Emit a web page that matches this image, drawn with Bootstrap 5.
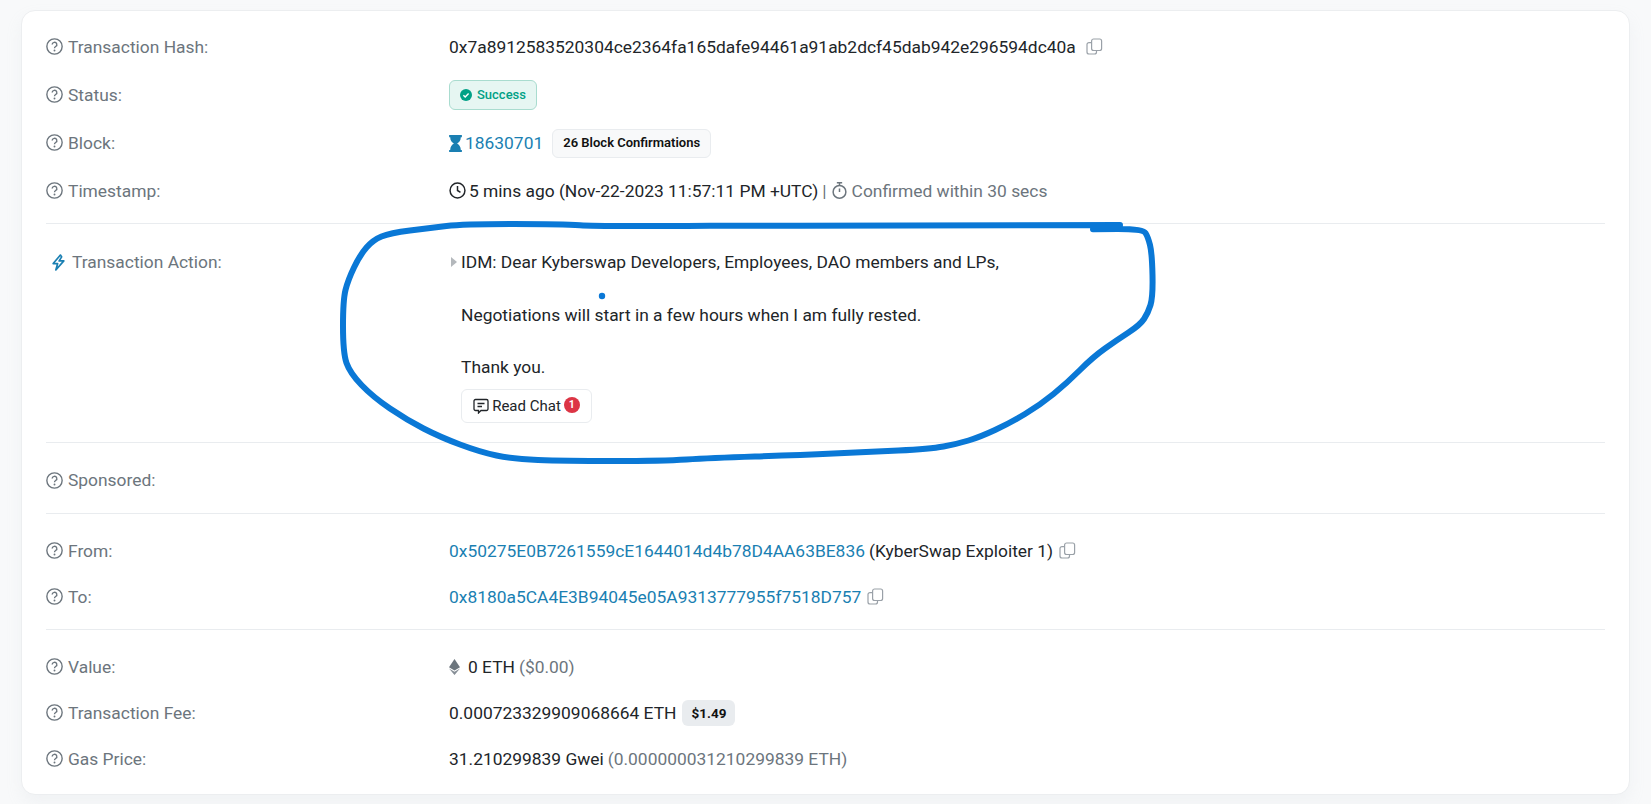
<!DOCTYPE html>
<html lang="en">
<head>
    <meta charset="UTF-8">
    <meta name="viewport" content="width=device-width, initial-scale=1.0">
    <title>Transaction Details</title>
    <link href="https://cdn.jsdelivr.net/npm/bootstrap@5.3.0/dist/css/bootstrap.min.css" rel="stylesheet">
    <style>
        body { background: #f8f9fa; font-family: Roboto, "Liberation Sans", sans-serif; font-size: 17.4px; color: #212529; height: 804px; overflow: hidden; }
        .tx-card { margin: 10px 21px 0 21px; height: 785px; padding: 12px 24px 0 24px; border-radius: 14px; border: 1px solid #eceef0; box-shadow: 0 8px 16px rgba(189,197,209,.12); }
        .tx-row { height: 46px; }
        .tx-row-tall { height: 48px; }
        .tx-row-ad { height: 46.5px; }
        .tx-label { width: 403px; color: #6c757d; gap: 5px; }
        .tx-rule { margin: 9px 0 14px; border-top: 1px solid #e9ecef; opacity: 1; }
        .tx-rule-top { margin-top: 8px; }
        .tx-action { padding: 11px 0 10px; }
        .tx-action-text { line-height: 26.25px; }
        .tx-link { color: #1a7fb2; text-decoration: none; }
        .tx-muted { color: #6c757d; }
        .tx-icon { width: 17px; height: 17px; flex-shrink: 0; }
        .tx-gap { margin-right: 3px; }
        .tx-copy { width: 17px; height: 17px; color: #9aa1a8; margin-left: 10px; }
        .tx-copy-near { margin-left: 6px; }
        .tx-ok { height: 30px; width: 88px; gap: 5px; background: #e6f6f2; border: 1px solid #a9dccf; border-radius: 6px; color: #00a186; font-size: 13px; font-weight: 500; }
        .tx-confirm { height: 29px; width: 159px; margin-left: 9px; background: #f8f9fa; border: 1px solid #e9ecef; border-radius: 6px; font-size: 13px; font-weight: 600; color: #111; }
        .tx-usd { height: 26px; width: 53px; margin-left: 6px; background: #e9ecef; border-radius: 6px; font-size: 13.500px; font-weight: 700; color: #111; }
        .tx-caret { width: 0; height: 0; border-left: 6px solid #b4b8bc; border-top: 5px solid transparent; border-bottom: 5px solid transparent; margin: 0 4px 0 2px; }
        .tx-chat { height: 34px; width: 131px; margin: 9px 0 0 12px; gap: 3px; border: 1px solid #e9ecef; border-radius: 6px; background: #fff; font-size: 15px; color: #212529; padding: 0; }
        .tx-count { width: 16px; height: 16px; padding: 0; font-size: 10.5px; line-height: 16px; background: #dc3545; margin-top: -1px; }
        .tx-scribble { position: absolute; left: 0; top: 0; pointer-events: none; }
    </style>
</head>
<body>
    <svg width="0" height="0" class="d-block">
        <symbol id="ico-help" viewBox="0 0 16 16">
            <circle cx="8" cy="8" r="7.2" fill="none" stroke="#6c757d" stroke-width="1.3"/>
            <path d="M5.8 6.2a2.2 2.1 0 1 1 3.3 1.8c-.8.5-1.1.9-1.1 1.700" fill="none" stroke="#6c757d" stroke-width="1.3"/>
            <circle cx="8" cy="11.800" r=".9" fill="#6c757d"/>
        </symbol>
        <symbol id="ico-copy" viewBox="0 0 17 17">
            <rect x="5.600" y="1" width="10" height="11.500" rx="2" fill="none" stroke="currentColor" stroke-width="1.2"/>
            <path d="M5.600 4.600H3a2 2 0 0 0-2 2V14a2 2 0 0 0 2 2h5.500a2 2 0 0 0 2-2v-1.500" fill="none" stroke="currentColor" stroke-width="1.2"/>
        </symbol>
    </svg>

    <div class="card tx-card">
        <div class="d-flex align-items-center tx-row-tall">
            <div class="tx-label d-flex align-items-center"><svg class="tx-icon"><use href="#ico-help"/></svg>Transaction Hash:</div>
            <div class="d-flex align-items-center">0x7a8912583520304ce2364fa165dafe94461a91ab2dcf45dab942e296594dc40a<svg class="tx-copy"><use href="#ico-copy"/></svg></div>
        </div>
        <div class="d-flex align-items-center tx-row-tall">
            <div class="tx-label d-flex align-items-center"><svg class="tx-icon"><use href="#ico-help"/></svg>Status:</div>
            <span class="tx-ok d-inline-flex align-items-center justify-content-center">
                <svg width="12" height="12" viewBox="0 0 12 12"><circle cx="6" cy="6" r="6" fill="#00a186"/><path d="M3.400 6.200l1.800 1.800 3.400-3.600" fill="none" stroke="#fff" stroke-width="1.4"/></svg>Success
            </span>
        </div>
        <div class="d-flex align-items-center tx-row-tall">
            <div class="tx-label d-flex align-items-center"><svg class="tx-icon"><use href="#ico-help"/></svg>Block:</div>
            <div class="d-flex align-items-center">
                <svg width="13" height="17" viewBox="0 0 12 16" class="tx-gap"><path d="M0 0h12v2h-1c0 3-1.600 4.800-3.500 6 1.900 1.200 3.500 3 3.500 6h1v2H0v-2h1c0-3 1.600-4.800 3.500-6C2.600 6.800 1 5 1 2H0z" fill="#1a7fb2"/></svg>
                <a href="#" class="tx-link">18630701</a>
                <span class="tx-confirm d-inline-flex align-items-center justify-content-center">26 Block Confirmations</span>
            </div>
        </div>
        <div class="d-flex align-items-center tx-row-tall">
            <div class="tx-label d-flex align-items-center"><svg class="tx-icon"><use href="#ico-help"/></svg>Timestamp:</div>
            <div class="d-flex align-items-center">
                <svg class="tx-icon tx-gap" viewBox="0 0 16 16"><circle cx="8" cy="8" r="7" fill="none" stroke="#212529" stroke-width="1.400"/><path d="M8 3.800V8l2.800 1.800" fill="none" stroke="#212529" stroke-width="1.400"/></svg>
                <span>5 mins ago (Nov-22-2023 11:57:11 PM +UTC)</span>
                <span class="tx-muted mx-1">|</span>
                <svg class="tx-icon me-1" viewBox="0 0 16 16"><circle cx="8" cy="9.300" r="6" fill="none" stroke="#6c757d" stroke-width="1.400"/><path d="M5.500.8h5M8 .8v2.500M8 6v3.500" fill="none" stroke="#6c757d" stroke-width="1.400"/></svg>
                <span class="tx-muted">Confirmed within 30 secs</span>
            </div>
        </div>

        <hr class="tx-rule tx-rule-top">

        <div class="d-flex tx-action">
            <div class="tx-label d-flex align-items-center align-self-start tx-action-text">
                <svg class="tx-icon ms-1" viewBox="0 0 16 16"><path d="M9.800 1L3 9h4.200L5.500 15l7.500-8.500H8.600l2.400-3.800z" fill="none" stroke="#1a7fb2" stroke-width="1.600" stroke-linejoin="round"/></svg>
                <span>Transaction Action:</span>
            </div>
            <div>
                <div class="d-flex align-items-center tx-action-text"><span class="tx-caret"></span><span>IDM: Dear Kyberswap Developers, Employees, DAO members and LPs,</span></div>
                <div class="tx-action-text ms-2 ps-1">&nbsp;</div>
                <div class="tx-action-text ms-2 ps-1">Negotiations will start in a few hours when I am fully rested.</div>
                <div class="tx-action-text ms-2 ps-1">&nbsp;</div>
                <div class="tx-action-text ms-2 ps-1">Thank you.</div>
                <button type="button" class="btn tx-chat d-flex align-items-center justify-content-center">
                    <svg width="16" height="16" viewBox="0 0 16 16"><path d="M2.500 1.500h11a1.500 1.500 0 0 1 1.500 1.500v8a1.500 1.500 0 0 1-1.500 1.500H8l-2.500 2.500v-2.500h-3A1.500 1.500 0 0 1 1 11V3a1.500 1.500 0 0 1 1.500-1.500zM4.500 5.500h7M4.500 8.500h4.500" fill="none" stroke="#212529" stroke-width="1.300"/></svg>
                    Read Chat
                    <span class="badge rounded-circle tx-count">1</span>
                </button>
            </div>
        </div>

        <hr class="tx-rule">

        <div class="d-flex align-items-center tx-row-ad">
            <div class="tx-label d-flex align-items-center"><svg class="tx-icon"><use href="#ico-help"/></svg>Sponsored:</div>
        </div>

        <hr class="tx-rule">

        <div class="d-flex align-items-center tx-row">
            <div class="tx-label d-flex align-items-center"><svg class="tx-icon"><use href="#ico-help"/></svg>From:</div>
            <div class="d-flex align-items-center"><a href="#" class="tx-link">0x50275E0B7261559cE1644014d4b78D4AA63BE836</a><span class="ms-1">(KyberSwap Exploiter 1)</span><svg class="tx-copy tx-copy-near"><use href="#ico-copy"/></svg></div>
        </div>
        <div class="d-flex align-items-center tx-row">
            <div class="tx-label d-flex align-items-center"><svg class="tx-icon"><use href="#ico-help"/></svg>To:</div>
            <div class="d-flex align-items-center"><a href="#" class="tx-link">0x8180a5CA4E3B94045e05A9313777955f7518D757</a><svg class="tx-copy tx-copy-near"><use href="#ico-copy"/></svg></div>
        </div>

        <hr class="tx-rule">

        <div class="d-flex align-items-center tx-row">
            <div class="tx-label d-flex align-items-center"><svg class="tx-icon"><use href="#ico-help"/></svg>Value:</div>
            <div class="d-flex align-items-center">
                <svg width="11" height="16" viewBox="0 0 11 16" class="me-1"><path d="M5.500 0L0 8.200l5.500 3.200L11 8.200z" fill="#6c757d"/><path d="M0 9.500L5.500 16 11 9.500l-5.500 3.200z" fill="#868e96"/></svg>
                <span class="ms-1">0 ETH</span><span class="tx-muted ms-1">($0.00)</span>
            </div>
        </div>
        <div class="d-flex align-items-center tx-row">
            <div class="tx-label d-flex align-items-center"><svg class="tx-icon"><use href="#ico-help"/></svg>Transaction Fee:</div>
            <div class="d-flex align-items-center">0.000723329909068664 ETH<span class="tx-usd d-inline-flex align-items-center justify-content-center">$1.49</span></div>
        </div>
        <div class="d-flex align-items-center tx-row">
            <div class="tx-label d-flex align-items-center"><svg class="tx-icon"><use href="#ico-help"/></svg>Gas Price:</div>
            <div class="d-flex align-items-center">31.210299839 Gwei<span class="tx-muted ms-1">(0.000000031210299839 ETH)</span></div>
        </div>
    </div>

    <svg class="tx-scribble" width="1651" height="804" viewBox="0 0 1651 804">
        <path d="M1120 225 L800 225.700 L710 225.700 Q597 226.700 580 225.300 Q563 224 513 224 Q463 224 446.500 226 Q430 228 410 230.500 Q390 233 381.500 236.500 Q373 240 366.500 247.500 Q360 255 354 267.500 Q348 280 345.500 290 Q343 300 343 326 Q343 353 346.500 363 Q350 373 361.500 385 Q373 397 390 408.500 Q407 420 423.500 428.500 Q440 437 460 444.500 Q480 452 496.500 455.500 Q513 459 538 460 Q563 461 613 461 Q663 461 686.500 459.500 Q710 458 755 456.500 Q800 455 833.500 453.500 Q867 452 898.500 450.500 Q930 449 943.500 446.500 Q957 444 968.500 440.500 Q980 437 995 430 Q1010 423 1025 414 Q1040 405 1053.500 394 Q1067 383 1080 370 Q1093 357 1105 348.500 Q1117 340 1128.500 332.500 Q1140 325 1144 319 Q1148 313 1150.500 305 Q1153 297 1152.500 275 Q1152 253 1150 245 Q1148 237 1145.500 233 Q1143 229 1118 229 L1093 229.300" fill="none" stroke="#0a78d6" stroke-width="6" stroke-linecap="round" stroke-linejoin="round"/>
        <circle cx="602" cy="296" r="3.200" fill="#0a78d6"/>
    </svg>

    <script src="https://cdn.jsdelivr.net/npm/bootstrap@5.3.0/dist/js/bootstrap.bundle.min.js"></script>
</body>
</html>
